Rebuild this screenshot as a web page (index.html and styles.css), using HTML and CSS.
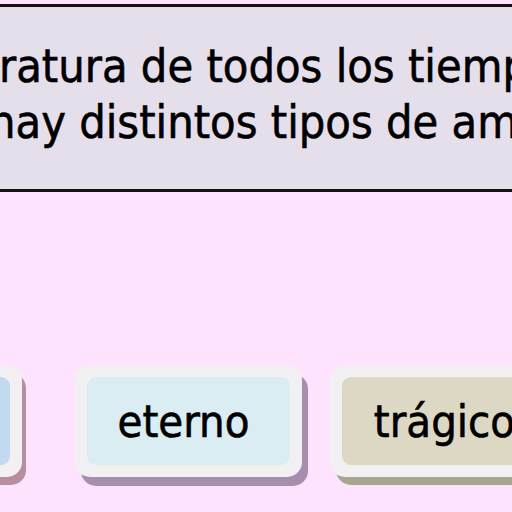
FILE: index.html
```html
<!DOCTYPE html>
<html lang="es">
<head>
<meta charset="utf-8">
<title>Tipos de amor</title>
<link rel="stylesheet" href="styles.css">
</head>
<body>
  <section class="panel">
    <div class="line line-1">ratura de todos los tiempos</div>
    <div class="line line-2">hay distintos tipos de amor</div>
  </section>
  <div class="choices">
    <div class="card card-blue"><div class="card-face">apasionado</div></div>
    <div class="card card-sky"><div class="card-face">eterno</div></div>
    <div class="card card-sand"><div class="card-face">trágico</div></div>
  </div>
</body>
</html>
```

FILE: styles.css
```css
html, body {
  margin: 0;
  padding: 0;
}
body {
  background: #fde3fd;
  width: 512px;
  height: 512px;
  overflow: hidden;
  font-family: "DejaVu Sans Condensed", "DejaVu Sans", sans-serif;
  color: #000;
  -webkit-text-stroke: 0.6px #000;
}
.panel {
  margin-top: 4px;
  height: 151px;
  padding-top: 31px;
  border-top: 3px solid #141014;
  border-bottom: 3px solid #141014;
  background: #e5dfeb;
  overflow: hidden;
}
.line {
  font-size: 46.5px;
  line-height: 56px;
  white-space: nowrap;
}
.line-1 {
  margin-left: -1px;
}
.line-2 {
  margin-left: -11px;
}
.choices {
  display: flex;
  align-items: flex-start;
  margin-top: 173px;
}
.card {
  flex: none;
  padding: 12px;
  border-radius: 15px;
  background: #f2f0f2;
}
.card-face {
  height: 88px;
  border-radius: 9px;
  display: flex;
  align-items: center;
  justify-content: center;
  font-size: 45px;
  white-space: nowrap;
  overflow: hidden;
}
.card-blue {
  width: 96px;
  margin-left: -98px;
  box-shadow: 4px 8px 0 #b88d9f;
}
.card-blue .card-face {
  background: #c3d9ef;
  color: transparent;
  -webkit-text-stroke: 0;
}
.card-sky {
  width: 203px;
  margin-left: 53px;
  box-shadow: 6px 9px 0 #a68fae;
}
.card-sky .card-face {
  background: #daedf3;
  padding-right: 10px;
  box-sizing: border-box;
}
.card-sand {
  width: 205px;
  margin-left: 28px;
  box-shadow: 6px 8px 0 #a9a590;
}
.card-sand .card-face {
  background: #ddd8c3;
}
```
